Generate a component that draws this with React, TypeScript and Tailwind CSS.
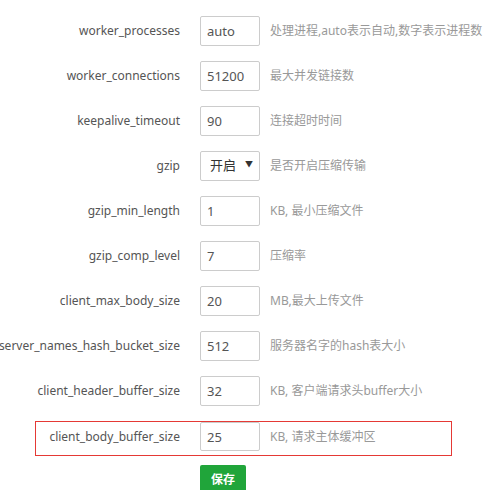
import { useState } from "react";

type Field = { name: string; value: string; tip: string; kind?: "select" };

const FIELDS: Field[] = [
  { name: "worker_processes", value: "auto", tip: "处理进程,auto表示自动,数字表示进程数" },
  { name: "worker_connections", value: "51200", tip: "最大并发链接数" },
  { name: "keepalive_timeout", value: "90", tip: "连接超时时间" },
  { name: "gzip", value: "on", tip: "是否开启压缩传输", kind: "select" },
  { name: "gzip_min_length", value: "1", tip: "KB, 最小压缩文件" },
  { name: "gzip_comp_level", value: "7", tip: "压缩率" },
  { name: "client_max_body_size", value: "20", tip: "MB,最大上传文件" },
  { name: "server_names_hash_bucket_size", value: "512", tip: "服务器名字的hash表大小" },
  { name: "client_header_buffer_size", value: "32", tip: "KB, 客户端请求头buffer大小" },
];

const font = { fontFamily: '"Noto Sans", "Noto Sans CJK SC", sans-serif' };

function ValueBox({ field }: { field: Field }) {
  const [value, setValue] = useState(field.value);

  if (field.kind === "select") {
    return (
      <div className="relative h-[30px] w-[60px] shrink-0">
        <select
          value={value}
          onChange={(e) => setValue(e.target.value)}
          className="h-full w-full appearance-none rounded-[2px] border border-[#ccc] bg-white pl-[9px] text-[13px] text-[#333] outline-none"
        >
          <option value="on">开启</option>
          <option value="off">关闭</option>
        </select>
        <span className="pointer-events-none absolute right-[7px] top-[9px] text-[8px] leading-none text-[#333]">▼</span>
      </div>
    );
  }

  return (
    <input
      value={value}
      onChange={(e) => setValue(e.target.value)}
      className="h-[30px] w-[60px] shrink-0 rounded-[2px] border border-[#ccc] bg-white px-[6px] text-[13px] text-[#555] outline-none"
    />
  );
}

function Row({ field }: { field: Field }) {
  return (
    <div className="mb-[15px] flex h-[30px] items-center">
      <div className="flex w-[180px] shrink-0 justify-end whitespace-nowrap text-[12px] text-[#555]">
        {field.name}
      </div>
      <div className="ml-[20px]">
        <ValueBox field={field} />
      </div>
      <span className="ml-[10px] whitespace-nowrap text-[12px] text-[#999]">{field.tip}</span>
    </div>
  );
}

export default function App() {
  const [bodyBuffer, setBodyBuffer] = useState("25");

  return (
    <div className="h-[490px] w-[495px] overflow-hidden bg-white pt-[16px]" style={font}>
      {FIELDS.map((f) => (
        <Row key={f.name} field={f} />
      ))}

      {/* highlighted row */}
      <div className="ml-[35px] flex h-[35px] w-[417px] items-start border border-[#e53935]">
        <div className="flex h-[30px] w-[144px] shrink-0 items-center justify-end whitespace-nowrap text-[12px] text-[#555]">
          client_body_buffer_size
        </div>
        <input
          value={bodyBuffer}
          onChange={(e) => setBodyBuffer(e.target.value)}
          className="ml-[20px] h-[29px] w-[60px] shrink-0 rounded-[2px] border border-[#ccc] bg-white px-[6px] text-[13px] text-[#555] outline-none"
        />
        <span className="ml-[10px] flex h-[30px] items-center whitespace-nowrap text-[12px] text-[#999]">
          KB, 请求主体缓冲区
        </span>
      </div>

      <div className="mt-[9px] flex pl-[200px]">
        <button className="h-[30px] w-[46px] rounded-[2px] bg-[#20a53a] text-[12px] font-bold text-white">
          保存
        </button>
      </div>
    </div>
  );
}
